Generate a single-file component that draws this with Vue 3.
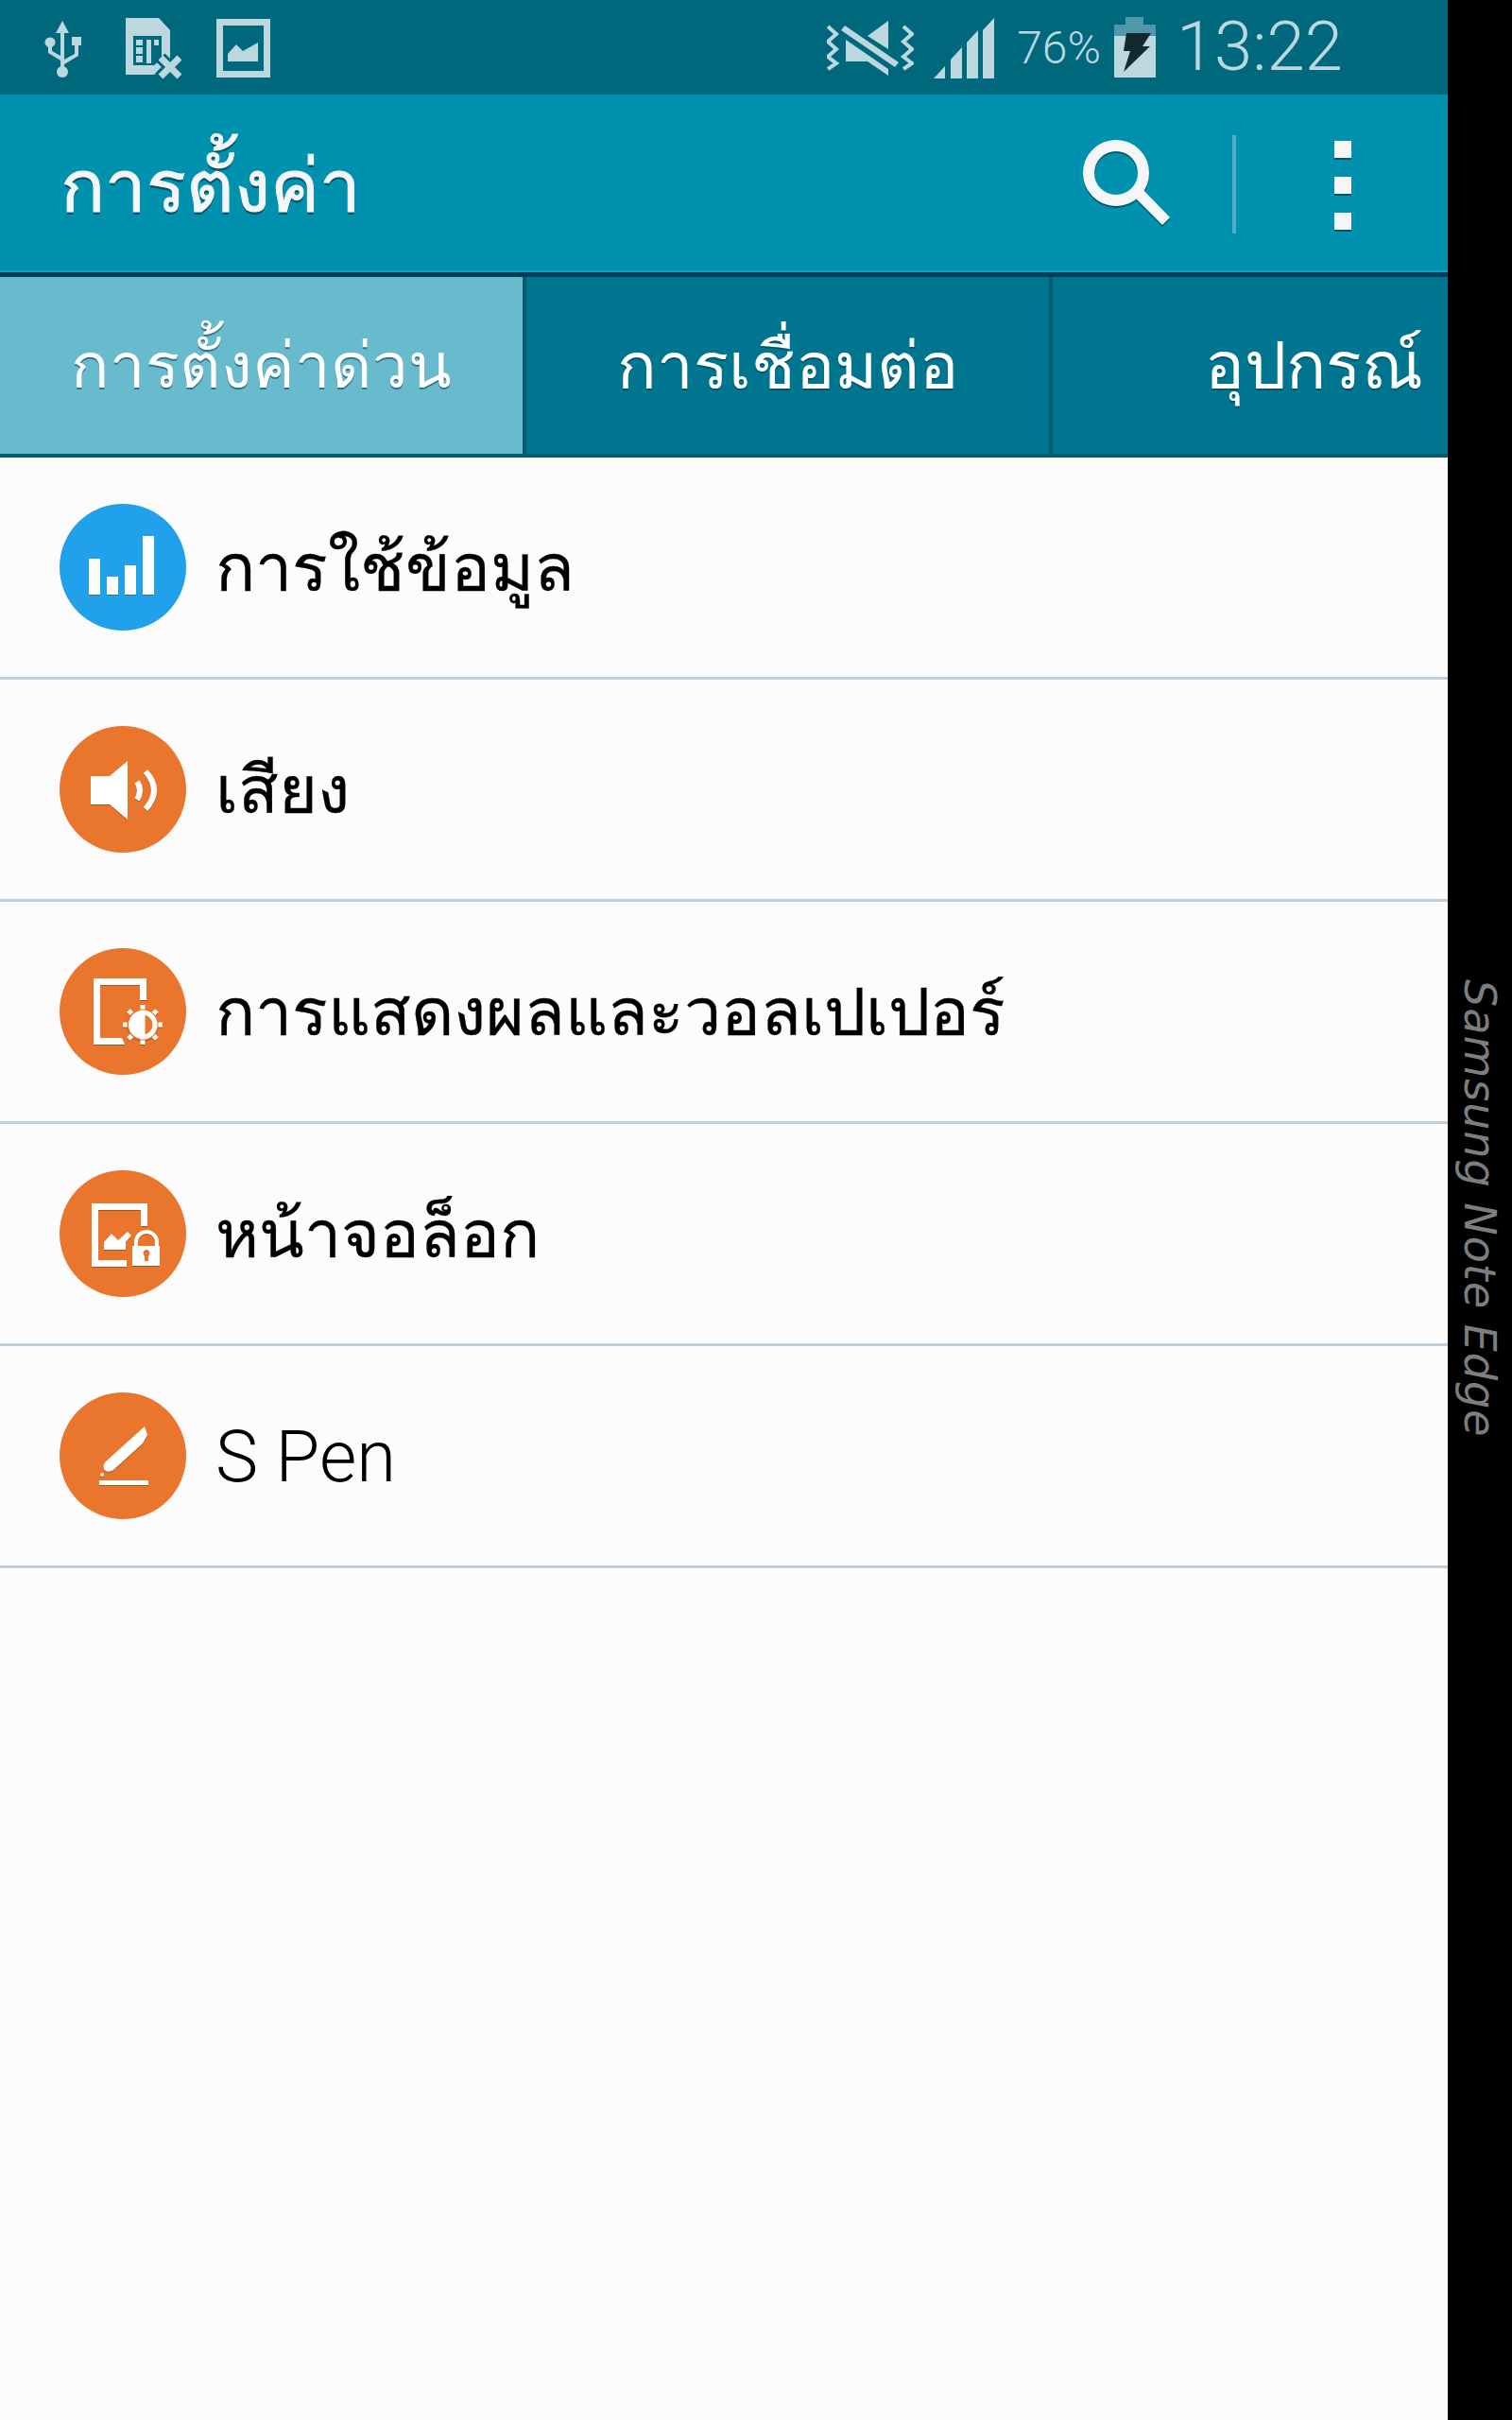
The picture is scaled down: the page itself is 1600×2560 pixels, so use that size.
<template>
  <div class="phone">
    <div class="screen">
      <!-- status bar -->
      <div class="status-bar">
        <div class="status-left">
          <svg class="ic-usb" width="40" height="60" viewBox="0 0 40 60">
            <path d="M20 0l7 13h-5v28l11-6v-9h-3v-9h10v9h-3v11l-15 9v5h-4v-9l-13-8v-6a5.5 5.5 0 1 1 4 0v4l9 5V13h-5z" />
            <circle cx="20" cy="54" r="6" />
          </svg>
          <svg class="ic-sim" width="62" height="66" viewBox="0 0 62 66">
            <path fill-rule="evenodd" d="M0 0h35l12 13v30L30 60H0zM8 19v31h22l8-7V19z" />
            <path d="M11 23h7v6h-7zM11 31h7v7h-7zM11 40h7v7h-7zM22 23h5v25h-5zM30 23h5v6h-5z" />
            <path class="sim-x-gap" d="M37 42l20 20M57 42L37 62" />
            <path class="sim-x" d="M37 42l20 20M57 42L37 62" />
          </svg>
          <svg class="ic-pic" width="57" height="62" viewBox="0 0 57 62">
            <path fill-rule="evenodd" d="M0 0h57v62H0zM7 7v48h43V7z" />
            <path d="M12 45v-8l9-10 7 7 16-9v20z" />
          </svg>
        </div>
        <div class="status-right">
          <svg class="ic-mute" width="92" height="58" viewBox="0 0 92 58">
            <path class="wave" d="M1 6l9 8-9 8 9 8-9 8 9 7-9 6M81 6l9 8-9 8 9 8-9 8 9 7-9 6" />
            <path d="M43 16L65 0v30zM15 10l4-5 57 39-4 5zM20 20l45 31v7L43 43H20z" />
          </svg>
          <svg class="ic-signal" width="64" height="64" viewBox="0 0 64 64">
            <path d="M0 64l12-13v13zM18 64V44l12-13v33zM35 64V26l12-13v51zM52 64V13L64 0v64z" />
          </svg>
          <span class="battery-text">76%</span>
          <svg class="ic-battery" width="44" height="64" viewBox="0 0 44 64">
            <path fill="#4f98aa" d="M12 0h19v8h13v12H0V8h12z" />
            <path d="M0 20h44v44H0z" />
            <path fill="#14282f" d="M13 17h26l-9 14h8L10 58l7-22H10z" />
          </svg>
          <span class="clock">13:22</span>
        </div>
      </div>

      <!-- action bar -->
      <div class="action-bar">
        <h1 class="title">การตั้งค่า</h1>
        <div class="actions">
          <svg class="ic-search" width="96" height="100" viewBox="0 0 96 100">
            <circle cx="35" cy="35" r="29" fill="none" stroke="#f5f6f7" stroke-width="12" />
            <path d="M53 59l9-8 30 31-8 8z" fill="#f5f6f7" />
          </svg>
          <div class="action-divider"></div>
          <div class="more">
            <span></span><span></span><span></span>
          </div>
        </div>
      </div>

      <!-- tabs -->
      <div class="tabs">
        <div class="tab active">การตั้งค่าด่วน</div>
        <div class="tab">การเชื่อมต่อ</div>
        <div class="tab last">อุปกรณ์</div>
      </div>

      <!-- list -->
      <div class="list">
        <div v-for="item in items" :key="item.key" class="row">
          <div class="circle" :class="item.color">
            <svg width="134" height="134" viewBox="0 0 134 134">
              <template v-if="item.key === 'data'">
                <path d="M31 58h12v38H31zM50 77h12v19H50zM69 65h12v31H69zM88 34h12v62H88z" />
              </template>
              <template v-else-if="item.key === 'sound'">
                <path d="M33 53h20l19-16v62L53 83H33z" />
                <path class="arc" d="M82 59Q88 68 82 78M91 48Q109 68 91 88" />
              </template>
              <template v-else-if="item.key === 'display'">
                <path d="M36 32h56v23h-7V39H43v56h23l3 7H36z" />
                <path class="ray" d="M88 60v42M67 81h42M73 66l30 30M103 66L73 96" />
                <circle cx="88" cy="81" r="15" class="punch" />
                <path d="M88 66a15 15 0 0 0 0 30z" />
                <path class="thin" d="M88 68a13 13 0 0 1 0 26z" />
              </template>
              <template v-else-if="item.key === 'lock'">
                <path d="M34 35h59v24h-7V42H41v53h30v7H34z" />
                <path d="M47 84v-8l8-9 7 7 10-9 4 4-6 7v8z" />
                <path class="shackle" d="M81 82V76a11 11 0 0 1 22 0v6" />
                <path fill-rule="evenodd" d="M77 80h29v21H77zM92 84a4 4 0 0 0-2 7v5h4v-5a4 4 0 0 0-2-7z" />
              </template>
              <template v-else>
                <path d="M47 81c-1-3 0-6 2-8l41-37 3 9-5 9-31 28c-3 2-8 3-10-1z" />
                <circle cx="45" cy="87" r="2" />
                <path d="M42 93h52v5H42z" />
              </template>
            </svg>
          </div>
          <span class="label" :class="{ latin: item.key === 'spen' }">{{ item.label }}</span>
        </div>
      </div>
    </div>

    <!-- edge panel -->
    <div class="edge">
      <span class="edge-text">Samsung Note Edge</span>
    </div>
  </div>
</template>

<script setup>
const items = [
  { key: 'data', label: 'การใช้ข้อมูล', color: 'blue' },
  { key: 'sound', label: 'เสียง', color: 'orange' },
  { key: 'display', label: 'การแสดงผลและวอลเปเปอร์', color: 'orange' },
  { key: 'lock', label: 'หน้าจอล็อก', color: 'orange' },
  { key: 'spen', label: 'S Pen', color: 'orange' },
]
</script>

<style>
html, body { margin: 0; padding: 0; background: #000; }
</style>

<style scoped>
.phone {
  width: 1600px;
  height: 2560px;
  display: flex;
  font-family: "Noto Sans", "DejaVu Sans", sans-serif;
}
.screen {
  width: 1532px;
  display: flex;
  flex-direction: column;
  background: #fcfcfc;
}

/* status bar */
.status-bar {
  height: 100px;
  background: #00687d;
  display: flex;
  justify-content: space-between;
  padding: 0 111px 0 46px;
  box-sizing: border-box;
  fill: #bcd7de;
}
.status-left, .status-right { display: flex; align-items: flex-start; }
.ic-usb { margin-top: 22px; }
.ic-sim { margin: 19px 0 0 47px; overflow: visible; }
.ic-pic { margin: 20px 0 0 34px; }
.ic-mute { margin-top: 22px; }
.ic-signal { margin: 19px 0 0 21px; }
.ic-battery { margin: 18px 0 0 14px; }
.wave { fill: none; stroke: #bcd7de; stroke-width: 4; }
.sim-x-gap { fill: none; stroke: #00687d; stroke-width: 13; }
.sim-x { fill: none; stroke: #bcd7de; stroke-width: 7; }
.battery-text {
  margin: 24px 0 0 24px;
  font: 300 48px/54px Roboto, sans-serif;
  color: #bcd7de;
}
.clock {
  margin: 12px 0 0 22px;
  font: 300 72.5px/76px Roboto, sans-serif;
  color: #bcd7de;
}

/* action bar */
.action-bar {
  height: 193px;
  background: #0091ae;
  border-bottom: 5px solid #003f57;
  box-sizing: border-box;
  display: flex;
  align-items: center;
  justify-content: space-between;
  padding: 0 102px 0 64px;
  box-shadow: inset 0 -2px 0 #1ca0bb;
}
.title {
  margin: 4px 0 0;
  font-size: 78px;
  font-weight: 500;
  color: #f5f6f7;
  -webkit-text-stroke: 1px #f5f6f7;
  text-shadow: 0 3px 0 #00566b;
}
.actions { display: flex; align-items: center; }
.ic-search {
  margin: 7px 0 0 3px;
  filter: drop-shadow(0 2px 0 #005a6e);
}
.action-divider {
  width: 4px;
  height: 104px;
  margin: 2px 0 0 62px;
  background: #4db0c7;
}
.more {
  margin: 4px 0 0 104px;
  display: flex;
  flex-direction: column;
  gap: 20px;
}
.more span {
  width: 18px;
  height: 18px;
  background: #f5f6f7;
  box-shadow: 0 2px 0 #005a6e;
}

/* tabs */
.tabs {
  height: 191px;
  display: flex;
  overflow: hidden;
}
.tab {
  width: 557px;
  flex-shrink: 0;
  box-sizing: border-box;
  display: flex;
  align-items: center;
  justify-content: center;
  background: #00758f;
  color: #fff;
  font-size: 69px;
  border-right: 4px solid #005c70;
  border-bottom: 4px solid #005c70;
  text-shadow: 0 2px 0 rgba(0, 60, 80, .55);
}
.tab.active { background: #68bacd; font-size: 67px; }
.tab.last {
  width: 420px;
  justify-content: flex-end;
  padding-right: 28px;
  border-right: 0;
  font-size: 70px;
}

/* list */
.row {
  height: 235px;
  box-sizing: border-box;
  border-bottom: 3px solid #c0ced9;
  display: flex;
  align-items: center;
  padding-left: 63px;
}
.circle {
  width: 134px;
  height: 134px;
  border-radius: 50%;
  flex-shrink: 0;
  fill: #fff;
}
.circle svg { display: block; filter: drop-shadow(0 1px 0 rgba(90, 40, 0, .45)); }
.circle.blue { background: #21a1ec; }
.circle.orange { background: #ea752c; }
.arc, .ray, .thin, .shackle { fill: none; stroke: #fff; }
.arc { stroke-width: 6; }
.ray { stroke-width: 5; }
.thin { stroke-width: 5; }
.shackle { stroke-width: 4; }
.punch { fill: #ea752c; stroke: #ea752c; stroke-width: 3; }
.label {
  margin-left: 31px;
  font-size: 70px;
  color: #000;
  -webkit-text-stroke: .3px #000;
}
.label.latin {
  margin: 2px 0 0 31px;
  font: 300 76px Roboto, sans-serif;
  -webkit-text-stroke: 0;
}

/* edge panel */
.edge {
  width: 68px;
  background: #000;
  display: flex;
  justify-content: center;
  align-items: flex-start;
  padding-top: 1036px;
  box-sizing: border-box;
}
.edge-text {
  writing-mode: vertical-rl;
  font: italic 300 46px/1 "DejaVu Sans", sans-serif;
  color: #7d7d7d;
  letter-spacing: 1px;
}
</style>
